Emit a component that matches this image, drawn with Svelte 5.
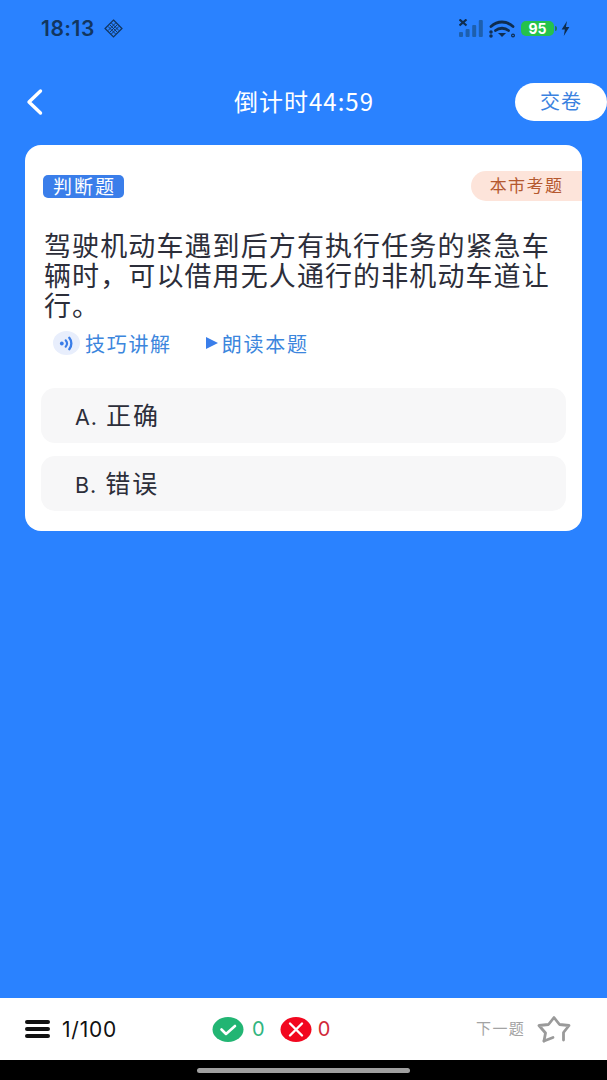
<script>
  const options = [
    { key: 'A.', text: '正确' },
    { key: 'B.', text: '错误' }
  ];
</script>

<div class="page">
  <div class="status">
    <div class="status-left">
      <span class="clock">18:13</span>
      <svg class="focus" width="19" height="19" viewBox="0 0 18 18" fill="none" stroke="#12365f" stroke-width="1.2">
        <path d="M9 1 17 9 9 17 1 9Z" />
        <path d="M5.5 5.5 12.5 12.5M12.5 5.5 5.5 12.5M7 3.8 14.2 11M11 3.8 3.8 11M3.8 7 11 14.2M14.2 7 7 14.2" stroke-width="0.9" />
      </svg>
    </div>
    <div class="status-right">
      <svg width="24" height="20" viewBox="0 0 24 20">
        <g fill="#1d5fae">
          <rect x="0" y="13" width="4" height="5" rx="1" />
          <rect x="6.6" y="10" width="4" height="8" rx="1" />
          <rect x="13.2" y="6" width="4" height="12" rx="1" />
          <rect x="19.8" y="1" width="4" height="17" rx="1" />
        </g>
        <path d="M0.5 0.5 7.5 6.5M7.5 0.5 0.5 6.5" stroke="#0f2d4f" stroke-width="2.2" />
      </svg>
      <svg width="26" height="20" viewBox="0 0 26 20" fill="none" stroke="#0f2d4f" stroke-width="2.8" stroke-linecap="round">
        <path d="M2 7.5C8.5 1.5 17.5 1.5 24 7.5" />
        <path d="M6.5 11.5C10 8.5 16 8.5 19.5 11.5" />
        <path d="M10.6 14.6 13 17 15.4 14.6Z" fill="#0f2d4f" stroke-width="1.4" />
        <circle cx="2" cy="13" r="1" stroke-width="1.5" />
        <circle cx="2" cy="17" r="1" stroke-width="1.5" />
        <circle cx="24" cy="16.5" r="1.4" stroke-width="1.2" />
      </svg>
      <div class="battery"><span>95</span></div>
      <svg class="bolt" width="9" height="15" viewBox="0 0 8 14"><path d="M5.4 0 0.4 8H3.4L2.4 14 7.6 5.6H4.4Z" fill="#0f2d4f" /></svg>
    </div>
  </div>

  <header class="topbar">
    <svg class="back" width="20" height="28" viewBox="0 0 20 28" fill="none" stroke="#fff" stroke-width="3.4" stroke-linecap="round" stroke-linejoin="round">
      <path d="M16.5 3 5 14 16.5 25" />
    </svg>
    <div class="timer">倒计时44:59</div>
    <button class="submit">交卷</button>
  </header>

  <section class="card">
    <div class="card-head">
      <span class="type">判断题</span>
      <span class="local">本市考题</span>
    </div>
    <p class="question">驾驶机动车遇到后方有执行任务的紧急车辆时，可以借用无人通行的非机动车道让行。</p>
    <div class="tools">
      <span class="tool">
        <span class="sound">
          <svg width="17" height="17" viewBox="0 0 16 16" fill="none" stroke="#3a7de8" stroke-linecap="round">
            <circle cx="3.6" cy="8" r="1.8" fill="#3a7de8" stroke="none" />
            <path d="M7.2 5C8.8 6.8 8.8 9.2 7.2 11" stroke-width="2" />
            <path d="M10.6 2.6C13.2 5.6 13.2 10.4 10.6 13.4" stroke-width="2.2" />
          </svg>
        </span>
        技巧讲解
      </span>
      <span class="tool read"><i class="play"></i>朗读本题</span>
    </div>
    <div class="options">
      {#each options as opt}
        <div class="option"><span class="key">{opt.key}</span>{opt.text}</div>
      {/each}
    </div>
  </section>

  <div class="spacer"></div>

  <footer class="bottom">
    <div class="count">
      <div class="menu"><i></i><i></i><i></i></div>
      <span>1/100</span>
    </div>
    <div class="score">
      <svg width="32" height="25" viewBox="0 0 32 25">
        <ellipse cx="16" cy="12.5" rx="15.5" ry="12.5" fill="#22b573" />
        <path d="M9.5 12.5 14 17 23 9" fill="none" stroke="#fff" stroke-width="2.6" stroke-linecap="round" stroke-linejoin="round" />
      </svg>
      <span class="right">0</span>
      <svg class="wrong-icon" width="32" height="25" viewBox="0 0 32 25">
        <ellipse cx="16" cy="12.5" rx="15.5" ry="12.5" fill="#f2071f" />
        <path d="M10 6.5 22 18.5M22 6.5 10 18.5" fill="none" stroke="#fff" stroke-width="2.4" stroke-linecap="round" />
      </svg>
      <span class="wrong">0</span>
    </div>
    <div class="next">
      <span>下一题</span>
      <svg width="34" height="27" viewBox="0 0 34 27" fill="none" stroke="#9a9a9a" stroke-width="2.8" stroke-linejoin="round" stroke-linecap="round">
        <path d="M7 25 8.5 17 2 9.5 11.5 8.5 17 1.5 22.5 8.5 32 9.5 26.5 16.5 26.5 24" />
        <path d="M7 25 16 21.5" />
      </svg>
    </div>
  </footer>

  <div class="homebar"><i></i></div>
</div>

<style>
  :global(body) {
    margin: 0;
    background: #2a82ff;
  }

  .page {
    display: flex;
    flex-direction: column;
    width: 607px;
    height: 1080px;
    overflow: hidden;
    background: #2a82ff;
    font-family: "Noto Sans CJK SC", "Noto Sans", sans-serif;
  }

  .status {
    display: flex;
    justify-content: space-between;
    align-items: center;
    height: 57px;
    padding: 0 37px 0 41px;
    box-sizing: border-box;
  }
  .status-left,
  .status-right {
    display: flex;
    align-items: center;
  }
  .status-left {
    gap: 9px;
  }
  .clock {
    font-family: Inter, sans-serif;
    font-size: 21px;
    font-weight: 600;
    letter-spacing: 0.5px;
    color: #12365f;
  }
  .status-right {
    gap: 6px;
  }
  .battery {
    display: flex;
    align-items: center;
    justify-content: center;
    position: relative;
    width: 33px;
    height: 15px;
    border-radius: 5px;
    background: #25c24c;
    color: #fff;
    font-family: Inter, sans-serif;
    font-size: 14px;
    font-weight: 700;
  }
  .battery::after {
    content: "";
    position: absolute;
    right: -3px;
    top: 5px;
    width: 2px;
    height: 5px;
    border-radius: 0 2px 2px 0;
    background: #1d7a55;
  }
  .bolt {
    margin-left: 1px;
  }

  .topbar {
    display: grid;
    grid-template-columns: 210px auto 1fr;
    align-items: center;
    height: 38px;
    margin-top: 26px;
    padding-left: 24px;
  }
  .timer {
    margin-bottom: 3px;
    font-size: 24px;
    line-height: 28px;
    letter-spacing: 1px;
    color: #fff;
  }
  .submit {
    justify-self: end;
    width: 92px;
    height: 38px;
    padding: 0 0 3px;
    border: none;
    border-radius: 19px;
    background: #fff;
    color: #3b82e0;
    font-family: inherit;
    font-size: 20px;
    letter-spacing: 1px;
  }

  .card {
    margin: 24px 25px 0;
    height: 386px;
    box-sizing: border-box;
    padding-top: 26px;
    border-radius: 16px;
    background: #fff;
  }
  .card-head {
    display: flex;
    justify-content: space-between;
    align-items: flex-start;
    padding-left: 18px;
  }
  .type {
    width: 81px;
    height: 23px;
    margin-top: 4px;
    border-radius: 5px;
    background: #3a7eea;
    color: #fff;
    font-size: 19px;
    line-height: 21px;
    letter-spacing: 2px;
    text-indent: 2px;
    text-align: center;
  }
  .local {
    width: 111px;
    height: 30px;
    border-radius: 15px 0 0 15px;
    background: #fde4da;
    color: #b5592f;
    font-size: 17px;
    line-height: 27px;
    letter-spacing: 1.4px;
    text-align: center;
  }
  .question {
    margin: 29px 0 0 19px;
    width: 514px;
    color: #2c2e3a;
    font-size: 27px;
    line-height: 30px;
    letter-spacing: 1.1px;
  }
  .tools {
    display: flex;
    align-items: center;
    height: 30px;
    margin: 8px 0 0 28px;
    color: #3c86dd;
    font-size: 20px;
    letter-spacing: 1.7px;
  }
  .tool {
    display: flex;
    align-items: center;
  }
  .sound {
    display: flex;
    align-items: center;
    justify-content: center;
    width: 27px;
    height: 24px;
    margin-right: 5px;
    border-radius: 50%;
    background: #e8eefc;
  }
  .read {
    margin-left: 34px;
  }
  .play {
    width: 0;
    height: 0;
    margin-right: 4px;
    border-left: 12px solid #3a7eea;
    border-top: 6.5px solid transparent;
    border-bottom: 6.5px solid transparent;
  }
  .options {
    display: flex;
    flex-direction: column;
    gap: 13px;
    margin: 30px 16px 0;
  }
  .option {
    display: flex;
    align-items: baseline;
    height: 55px;
    line-height: 52px;
    padding-left: 34px;
    border-radius: 14px;
    background: #f7f7f8;
    color: #2c2e3a;
    font-size: 25px;
    letter-spacing: 2px;
  }
  .key {
    font-family: Inter, sans-serif;
    margin-right: 8px;
    font-size: 21.5px;
    letter-spacing: 1px;
  }

  .spacer {
    flex: 1;
  }

  .bottom {
    display: flex;
    align-items: center;
    height: 62px;
    background: #fff;
  }
  .count {
    display: flex;
    align-items: center;
    gap: 12px;
    width: 187px;
    box-sizing: border-box;
    margin-left: 25px;
    color: #111;
    font-family: Inter, sans-serif;
    font-size: 21px;
    letter-spacing: 0.8px;
  }
  .menu {
    display: flex;
    flex-direction: column;
    gap: 3.5px;
  }
  .menu i {
    display: block;
    width: 25px;
    height: 3.5px;
    border-radius: 2px;
    background: #111;
  }
  .score {
    display: flex;
    align-items: center;
    font-family: Inter, sans-serif;
    font-size: 20px;
  }
  .right {
    margin-left: 8px;
    color: #31b580;
  }
  .wrong-icon {
    margin-left: 15px;
  }
  .wrong {
    margin-left: 6px;
    color: #d22a3a;
  }
  .next {
    display: flex;
    align-items: center;
    gap: 12px;
    margin-left: auto;
    margin-right: 36px;
    color: #a3a3a3;
    font-size: 15px;
    letter-spacing: 1.3px;
  }
  .next span {
    margin-bottom: 3px;
  }
  .homebar {
    display: flex;
    justify-content: center;
    align-items: center;
    height: 20px;
    background: #000;
  }
  .homebar i {
    display: block;
    width: 213px;
    height: 5px;
    border-radius: 3px;
    background: #a0a0a0;
  }
</style>
